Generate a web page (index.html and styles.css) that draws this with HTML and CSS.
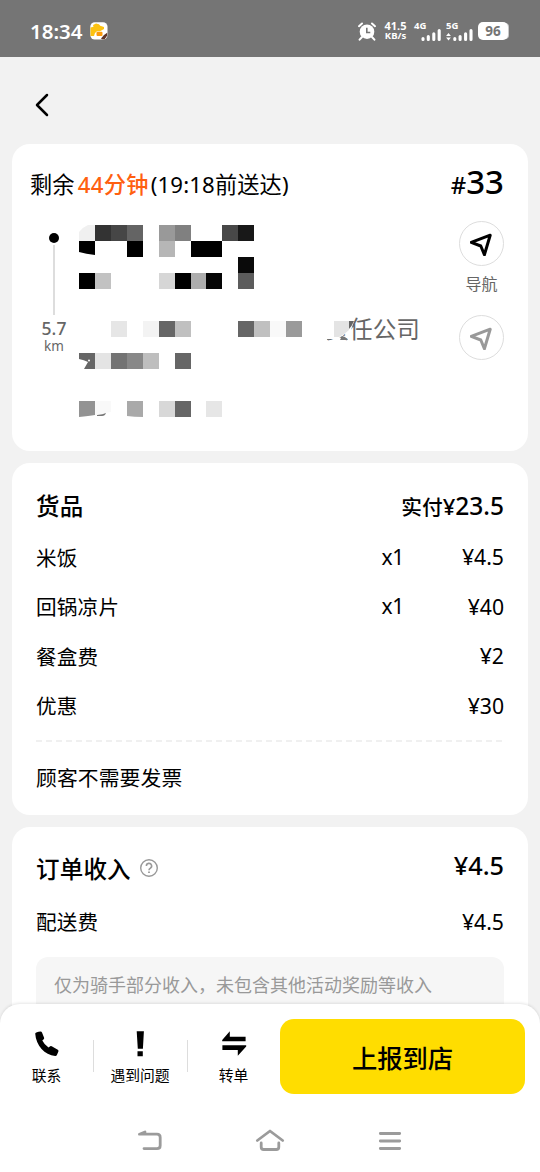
FILE: index.html
```html
<!DOCTYPE html>
<html lang="zh-CN">
<head>
<meta charset="utf-8">
<title>订单详情</title>
<link rel="stylesheet" href="styles.css">
</head>
<body>
<div class="phone">
  <header class="status">
    <span class="clock">18:34</span>
    <svg class="app-badge" width="18" height="18" viewBox="0 0 18 18">
      <rect x=".3" y=".3" width="17.2" height="17.2" rx="4.5" fill="#fff"/>
      <path d="M3 3l3-1.6 3 .8 1.2 1.6 3.8 1.2v2l-4 2.2H7L5 11l-1 3H.5V5.5l3-.8z" fill="#fcc211"/>
      <rect x="6.5" y="9.7" width="6" height="4.2" rx="1" fill="#fb9a0c"/>
      <path d="M11 16.5l3-3.5 3.2-2.2v2.7l-2.5 3.8H12z" fill="#5d3427"/>
    </svg>
    <div class="indicators">
      <svg class="alarm" width="18" height="19" viewBox="0 0 18 19">
        <path d="M1 4.2L4 1.5M17 4.2L14 1.5M4 15l-2.4 2.7M14 15l2.4 2.7" stroke="#fff" stroke-width="2" stroke-linecap="round"/>
        <circle cx="9" cy="9.7" r="7.3" fill="#fff"/>
        <path d="M8.8 5.8v4.7h3.5" fill="none" stroke="#757575" stroke-width="1.6"/>
      </svg>
      <span class="speed"><b>41.5</b><b>KB/s</b></span>
      <span class="signal"><b>4G</b>
        <svg width="20" height="12" viewBox="0 0 20 12" stroke="#fff" stroke-width="3.1" stroke-linecap="round"><path d="M2 9.6v.8M7.3 7.5v2.9M12.8 4.8v5.6M18.2 1.6v8.8"/></svg>
      </span>
      <span class="signal wide"><b>5G</b>
        <svg width="27" height="13" viewBox="0 0 27 13"><path d="M2.5 5L4.9 8H.1zM.1 9.5h4.8L2.5 12.5z" fill="#fff"/><path d="M8.8 10.6v.8M14.1 8.5v2.9M19.6 5.8v5.6M25 2.6v8.8" stroke="#fff" stroke-width="3.1" stroke-linecap="round"/></svg>
      </span>
      <span class="battery">96</span>
    </div>
  </header>

  <nav class="topbar">
    <svg width="14" height="24" viewBox="0 0 14 24"><path d="M12 2L2 12l10 10" fill="none" stroke="#000" stroke-width="2.5" stroke-linecap="round" stroke-linejoin="round"/></svg>
  </nav>

  <main>
    <section class="card delivery">
      <div class="delivery-head">
        <div class="deadline">剩余<span class="left">44分钟</span>(19:18前送达)</div>
        <div class="number"><small>#</small>33</div>
      </div>
      <div class="route">
        <div class="timeline">
          <i class="dot"></i><i class="line"></i>
          <span class="km">5.7</span><span class="unit">km</span>
        </div>
        <svg class="address" width="360" height="210" viewBox="79 215 360 210">
          <text x="325.5" y="337.5" class="company">责任公司</text>
          <path d="M322 316h28v4l4 1-3 9-12 8-4 1h-13z" fill="#fff"/>
          <path d="M342 336l3 1 3 3h-8zM327 339l4 1h-4z" fill="#777"/>
          <g shape-rendering="crispEdges">
            <path fill="#333" d="M95 225h16v16H95z"/><path fill="#464646" d="M111 225h16v16h-16z"/><path fill="#646464" d="M127 225h16v16h-16z"/>
            <path fill="#999" d="M159 225h16v16h-16z"/><path fill="#808080" d="M175 225h16v16h-16z"/><path fill="#484848" d="M222 225h16v16h-16z"/><path fill="#181818" d="M238 225h16v16h-16z"/>
            <path fill="#000" d="M127 241h16v16h-16zM191 241h31v16h-31zM79 273h16v16H79zM175 273h16v16h-16z"/><path fill="#b6b6b6" d="M159 241h16v16h-16z"/>
            <path fill="#0a0a0a" d="M238 257h16v16h-16z"/><path fill="#c2c2c2" d="M95 273h16v16H95z"/><path fill="#d6d6d6" d="M159 273h16v16h-16z"/><path fill="#adadad" d="M191 273h15v16h-15z"/><path fill="#050505" d="M206 273h16v16h-16z"/><path fill="#5c5c5c" d="M238 273h16v16h-16z"/>
            <path fill="#e6e6e6" d="M111 321h16v16h-16zM206 401h16v16h-16z"/><path fill="#f3f3f3" d="M143 321h16v16h-16z"/><path fill="#666" d="M159 321h16v16h-16zM238 321h16v16h-16zM175 353h16v16h-16zM175 401h16v16h-16z"/><path fill="#c0c0c0" d="M175 321h16v16h-16zM254 321h16v16h-16z"/><path fill="#f9f9f9" d="M270 321h16v16h-16z"/><path fill="#9a9a9a" d="M286 321h16v16h-16z"/>
            <path fill="#e4e4e4" d="M95 353h16v16H95z"/><path fill="#737373" d="M111 353h16v16h-16z"/><path fill="#888" d="M127 353h16v16h-16z"/><path fill="#bebebe" d="M143 353h16v16h-16z"/>
            <path fill="#d8d8d8" d="M159 401h16v16h-16z"/>
          </g>
          <path fill="#f0f0f0" d="M95 225v16H79v-9q4-5 9-7z"/>
          <path fill="#000" d="M79 241h16v14q-9-1-16-3z"/>
          <path fill="#e4e4e4" d="M334 321h15v9q-4 4-10 7h-5z"/><path fill="#666" d="M349 321h5q-2 5-5 8z"/>
          <path fill="#666" d="M79 353h16v16H84l4-7q-4-2-9-3z"/><circle cx="89" cy="360.5" r="1" fill="#fff"/>
          <path fill="#939393" d="M79 401h16v14q-6 1-16 2z"/><path fill="#f9f9f9" d="M95 401h16v11l-16 3z"/><path fill="#777" d="M97 415q6-.5 9-2-1 3-4 3h-5z"/>
          <path fill="#a9a9a9" d="M127 401h16v16q-9 0-16-1z"/>
        </svg>
        <div class="actions">
          <span class="round"><svg width="24" height="24" viewBox="0 0 24 24"><path d="M1.2 10.3L20.2 3.2 14.4 22.8 10.8 14z" fill="none" stroke="#000" stroke-width="3" stroke-linejoin="round"/></svg></span>
          <span class="nav-label">导航</span>
          <span class="round muted"><svg width="24" height="24" viewBox="0 0 24 24"><path d="M1.2 10.3L20.2 3.2 14.4 22.8 10.8 14z" fill="none" stroke="#999" stroke-width="3" stroke-linejoin="round"/></svg></span>
        </div>
      </div>
    </section>

    <section class="card goods">
      <div class="title-row"><h2>货品</h2><div class="paid">实付<b>¥<span>23.5</span></b></div></div>
      <div class="item"><span>米饭</span><span>x1</span><span>¥4.5</span></div>
      <div class="item"><span>回锅凉片</span><span>x1</span><span>¥40</span></div>
      <div class="item"><span>餐盒费</span><span></span><span>¥2</span></div>
      <div class="item"><span>优惠</span><span></span><span>¥30</span></div>
      <svg class="dash" width="468" height="2"><path d="M0 1h468" stroke="#ececec" stroke-width="1.5" stroke-dasharray="6 4"/></svg>
      <div class="invoice">顾客不需要发票</div>
    </section>

    <section class="card income">
      <div class="title-row"><h2>订单收入</h2>
        <svg class="help" width="20" height="20" viewBox="0 0 20 20" fill="none" stroke="#999"><circle cx="10" cy="10" r="8.3" stroke-width="1.4"/><path d="M7.4 8a2.6 2.6 0 1 1 3.9 2.2q-1.3.7-1.3 2" stroke-width="1.6"/><path d="M10 13.4v1.7" stroke-width="1.8"/></svg>
        <b class="sum">¥4.5</b>
      </div>
      <div class="item fee"><span>配送费</span><span></span><span>¥4.5</span></div>
      <p class="note">仅为骑手部分收入，未包含其他活动奖励等收入<br>实收以订单送达后老算为准，如有活动和其他请送达</p>
    </section>
  </main>

  <footer class="dock">
    <div class="toolbar">
      <div class="tool contact">
        <svg width="26" height="26" viewBox="0 0 26 26"><path d="M1.2 2.5Q2 1.2 6.6.6q1 0 1.4.9l2.1 5.2q.3.9-.4 1.5L8.3 9.6q2 4.2 6.2 6.9l1.7-1.2q.7-.5 1.5 0l6.1 3.5q1 .7.6 1.6l-1.5 3.7q-.5 1-1.7.9C10.8 24 2 14.7 1.2 2.5z"/></svg>
        <span>联系</span>
      </div>
      <div class="tool problem">
        <svg width="26" height="26" viewBox="0 0 26 26"><path d="M9.7.3h7.2l-1 17.5h-5.1zM10.5 20.3h5.3v4.9h-5.3z"/></svg>
        <span>遇到问题</span>
      </div>
      <div class="tool transfer">
        <svg width="26" height="26" viewBox="0 0 26 26"><path d="M1.2 10.2V9L8.8.3v5.4h15.8v4.5zM1.4 14.3h23.8v1.2L16.8 24.7v-5.6H1.4z"/></svg>
        <span>转单</span>
      </div>
      <button class="report">上报到店</button>
    </div>
    <div class="system">
      <svg width="26" height="24" viewBox="0 0 26 24"><path d="M9 3L3.4 5.2H21q3.2 0 3.2 3.2v8q0 3.2-3.2 3.2H8"/></svg>
      <svg width="30" height="24" viewBox="0 0 30 24"><path d="M2.3 11.5L15 2l12.7 9.5M6.2 14v4q0 2.5 2.5 2.5h12.6q2.5 0 2.5-2.5v-4"/></svg>
      <svg width="24" height="24" viewBox="0 0 24 24"><path d="M2.3 4.5h19.4M2.3 12h19.4M2.3 19.5h19.4"/></svg>
    </div>
  </footer>
</div>
</body>
</html>
```

FILE: styles.css
```css
* { box-sizing: border-box; }
body { margin: 0; color: #000; background: #f2f2f2; font-family: "Noto Sans", "Noto Sans CJK SC", sans-serif; }
svg { display: block; flex: none; }
.phone { width: 540px; height: 1172px; display: flex; flex-direction: column; overflow: hidden; }

.status { height: 57px; flex: none; background: #757575; color: #fff; display: flex; align-items: center; padding: 5px 32px 0 30px; }
.clock { font-size: 20.5px; font-weight: 600; line-height: 26px; width: 60px; padding-bottom: 1px; }
.indicators { margin-left: auto; display: flex; align-items: center; height: 20px; }
.speed { display: flex; flex-direction: column; width: 25px; margin-left: 7px; font-size: 11px; line-height: 10px; text-align: center; }
.speed b + b { font-size: 9.5px; }
.signal { display: flex; flex-direction: column; align-items: flex-end; width: 27px; height: 20px; margin-left: 6px; }
.signal b { font-size: 9.5px; line-height: 9px; align-self: flex-start; height: 8px; }
.signal.wide { margin-left: 5px; }
.signal.wide svg { margin-top: -1px; }
.battery { width: 30px; height: 18px; margin-left: 5px; border-radius: 5px; background: #fff; color: #757575; box-shadow: 2px 0 0 -1px #c9c9c9; font-size: 13.5px; font-weight: 700; line-height: 18px; text-align: center; }

.topbar { height: 87px; flex: none; padding: 36px 35px; }
main { height: 880px; flex: none; display: flex; flex-direction: column; gap: 12px; padding: 0 12px; overflow: hidden; }
.card { background: #fff; border-radius: 18px; flex: none; }

.delivery { height: 307px; padding: 19px 24px 0 18px; }
.delivery-head { display: flex; justify-content: space-between; align-items: center; height: 40px; white-space: nowrap; }
.deadline { font-size: 22.2px; letter-spacing: .15px; }
.left { color: #ff6010; margin: 0 2px 0 3px; font-weight: 500; letter-spacing: .3px; }
.number { font-size: 33px; line-height: 40px; font-weight: 500; padding-top: 1px; }
.number small { font-size: 24px; }
.route { display: flex; padding-top: 12px; }
.timeline { width: 46px; margin: 0 2px 0 1px; display: flex; flex-direction: column; align-items: center; padding-top: 18px; color: #666; }
.dot { width: 10px; height: 10px; border-radius: 5px; background: #000; }
.line { width: 1.5px; height: 70px; margin-top: 2px; background: #ddd; }
.km { font-size: 17.5px; line-height: 20px; margin-top: 3px; font-weight: 500; }
.unit { font-size: 13.5px; line-height: 17px; }
.address { flex: none; }
.company { font-family: "Noto Sans CJK SC", sans-serif; font-size: 23.6px; fill: #666; }
.actions { margin-left: auto; width: 45px; display: flex; flex-direction: column; align-items: center; padding-top: 6px; }
.round { width: 45px; height: 45px; flex: none; border: 1.5px solid #ddd; border-radius: 50%; display: grid; place-items: center; }
.nav-label { font-size: 16px; line-height: 20px; margin: 8px 0 21px; color: #666; white-space: nowrap; }

.goods { height: 352px; padding: 17px 24px 0; }
.title-row { display: flex; align-items: center; height: 50px; }
h2 { margin: 0; font-size: 23.5px; font-weight: 500; letter-spacing: .2px; }
.paid { margin-left: auto; font-size: 20.7px; font-weight: 500; display: flex; align-items: baseline; }
.paid b { font-weight: 500; font-size: 22px; }
.paid span { font-size: 24.5px; }
.item { display: grid; grid-template-columns: 1fr 62px 100px; align-items: center; height: 49.5px; font-size: 20.6px; letter-spacing: .2px; }
.item span:nth-child(2) { text-align: right; font-size: 21px; letter-spacing: -.3px; }
.item span:last-child { text-align: right; font-size: 21.2px; letter-spacing: 0; }
.title-row + .item { margin-top: 2px; }
.dash { margin-top: 10px; }
.invoice { font-size: 20.8px; line-height: 30px; margin-top: 21px; letter-spacing: .1px; }

.income { height: 240px; padding: 16px 24px 0; }
.help { margin-left: 8px; }
.sum { margin-left: auto; font-size: 25.3px; font-weight: 500; line-height: 40px; padding-bottom: 6px; }
.income .fee { margin-top: 3px; height: 50px; }
.note { margin: 11px 0 0; height: 90px; padding: 14px 18px; border-radius: 12px; background: #f6f6f6; color: #999; font-size: 18px; line-height: 28px; white-space: nowrap; }

.dock { position: relative; margin-top: -20px; height: 168px; flex: none; background: #fff; border-radius: 20px 20px 0 0; box-shadow: 0 -1px 3px rgba(0, 0, 0, .1); }
.toolbar { display: flex; height: 105px; padding: 15px 15px 0 0; }
.tool { position: relative; display: flex; flex-direction: column; align-items: center; padding-top: 12px; font-size: 14.8px; white-space: nowrap; }
.tool span { line-height: 20px; margin-top: 8px; }
.contact { width: 93px; }
.problem { width: 94px; }
.transfer { width: 93px; }
.problem::before, .transfer::before { content: ""; position: absolute; left: 0; top: 21px; width: 1px; height: 32px; background: #ddd; }
.report { flex: 1; height: 75px; border: 0; border-radius: 14px; background: #ffdd00; color: #000; font: 500 25.3px "Noto Sans CJK SC", sans-serif; }
.system { display: flex; justify-content: space-between; align-items: center; height: 63px; padding: 0 138px 0 136px; }
.system svg { fill: none; stroke: #9b9b9b; stroke-width: 2.8; stroke-linecap: round; stroke-linejoin: round; }
```
